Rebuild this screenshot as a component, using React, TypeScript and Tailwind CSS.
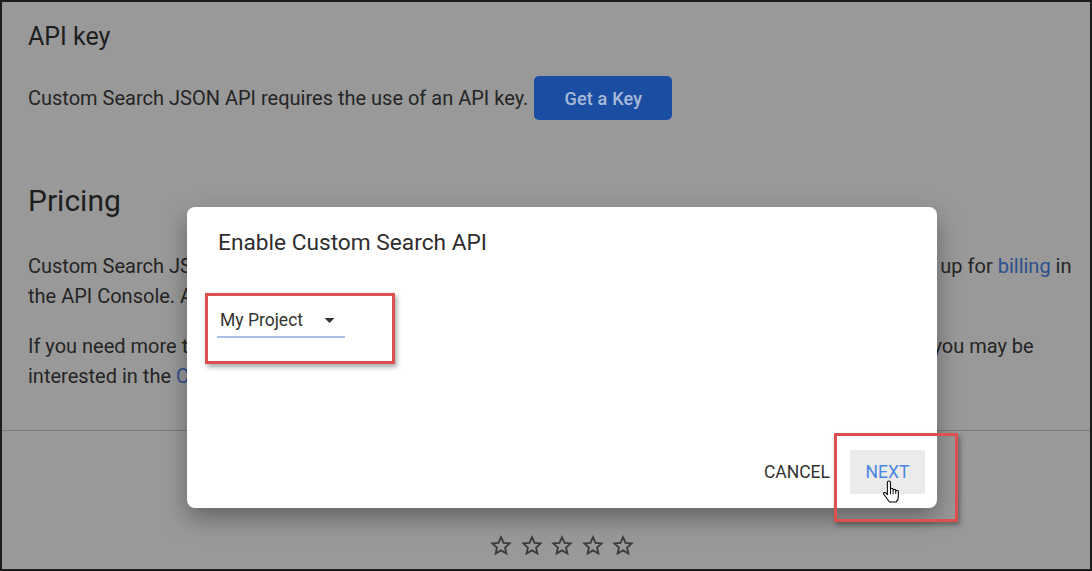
const font = { fontFamily: 'Roboto, "Liberation Sans", sans-serif' }

function StarOutline() {
  return (
    <svg width="24" height="24" viewBox="0 0 24 24" className="shrink-0">
      <path
        d="M12 3.2l2.55 5.6 6.1.6-4.6 4.1 1.35 6-5.4-3.15-5.4 3.15 1.35-6-4.6-4.1 6.1-.6z"
        fill="none"
        stroke="#3a3a3a"
        strokeWidth="1.8"
        strokeLinejoin="miter"
      />
    </svg>
  )
}

function HandCursor() {
  return (
    <svg width="18" height="23" viewBox="0 0 17 22" className="absolute left-[880px] top-[478px]">
      <path
        d="M5 2.5Q5 1 6.5 1Q8 1 8 2.5V9Q8 7.8 9.25 7.8Q10.5 7.8 10.5 9V10Q10.5 8.8 11.75 8.8Q13 8.8 13 10V11Q13 9.8 14.25 9.8Q15.5 9.8 15.5 11V16Q15.5 19 13.5 21H7Q5.5 19 3 15.5L1.5 13.5Q1 12.3 2 12Q3 11.6 4 12.8L5 14Z"
        fill="#fff"
        stroke="#000"
        strokeWidth="1"
        strokeLinejoin="round"
      />
      <path d="M8 9V13.5M10.5 10V13.5M13 11V13.5" stroke="#000" strokeWidth="0.9" />
    </svg>
  )
}

export default function App() {
  return (
    <div
      className="relative w-[1092px] h-[571px] overflow-hidden bg-[#999999] border-2 border-[#1c1c1c] text-[#252525]"
      style={font}
    >
      {/* page underneath */}
      <div className="pl-[26px] pt-[19px]">
        <h2 className="text-[25px] leading-[32px] text-[#1e1e1e]">API key</h2>
        <div className="flex items-center gap-[6px] mt-[23px]">
          <p className="text-[20px] leading-[30px]">Custom Search JSON API requires the use of an API key.</p>
          <button className="h-[44px] w-[138px] rounded-[5px] bg-[#1b4ea2] text-[#a8b9d8] text-[18px] font-medium tracking-[0.2px]">
            Get a Key
          </button>
        </div>

        <h2 className="mt-[63px] text-[30px] leading-[36px] text-[#1e1e1e]">Pricing</h2>
        <div className="mt-[32px] text-[20px] leading-[30px] whitespace-nowrap">
          <p>
            Custom Search JSON API provides 100 search queries per day for free. If you need more, you may sign up for{' '}
            <span className="text-[#2b4f8e]">billing</span> in
            <br />
            the API Console. Additional requests cost $5 per 1000 queries, up to 10k queries per day.
          </p>
          <p className="mt-[20px]">
            If you need more than 10,000{' '}
            <span className="[word-spacing:4.4px]">queries per day and your search engine searches 10 sites or fewer,</span>{' '}
            you may be
            <br />
            interested in the <span className="text-[#2b4f8e]">Custom Search Site Restricted JSON API</span>, which does
            not have a daily query limit.
          </p>
        </div>
      </div>

      <div className="mt-[39px] -ml-[2px] h-px bg-[#7b7b7b]" />

      <div className="flex gap-[6.5px] ml-[487px] mt-[103px]">
        <StarOutline />
        <StarOutline />
        <StarOutline />
        <StarOutline />
        <StarOutline />
      </div>

      {/* dialog */}
      <div className="absolute left-[185px] top-[205px] w-[750px] h-[301px] rounded-[8px] bg-white shadow-[0_10px_24px_rgba(0,0,0,0.35)] flex flex-col">
        <h3 className="pl-[31px] pt-[21px] text-[22.7px] leading-[30px] text-[#2e2e2e]">Enable Custom Search API</h3>
        <div className="ml-[30px] mt-[49px] w-[128px] border-b-2 border-[#a9c1e8] flex items-center justify-between pb-[3px] pr-[10px]">
          <span className="pl-[3px] text-[17.5px] leading-[26px] text-[#333]">My Project</span>
          <svg width="11" height="5" viewBox="0 0 10 5">
            <path d="M0 0h10L5 5z" fill="#333" />
          </svg>
        </div>
        <div className="mt-auto flex justify-end items-center gap-[20px] pr-[12px] pb-[14px]">
          <span className="text-[17.5px] text-[#333]">CANCEL</span>
          <button className="h-[44px] w-[75px] bg-[#ebebeb] text-[#4a86e0] text-[17.5px]">NEXT</button>
        </div>
      </div>

      {/* annotations */}
      <div className="absolute left-[203px] top-[291px] w-[190px] h-[71px] border-[3px] border-[#dc5050] shadow-[2px_3px_5px_rgba(0,0,0,0.35)]" />
      <div className="absolute left-[832px] top-[431px] w-[124px] h-[89px] border-[3px] border-[#dc5050] shadow-[2px_3px_5px_rgba(0,0,0,0.35)]" />
      <HandCursor />
    </div>
  )
}
